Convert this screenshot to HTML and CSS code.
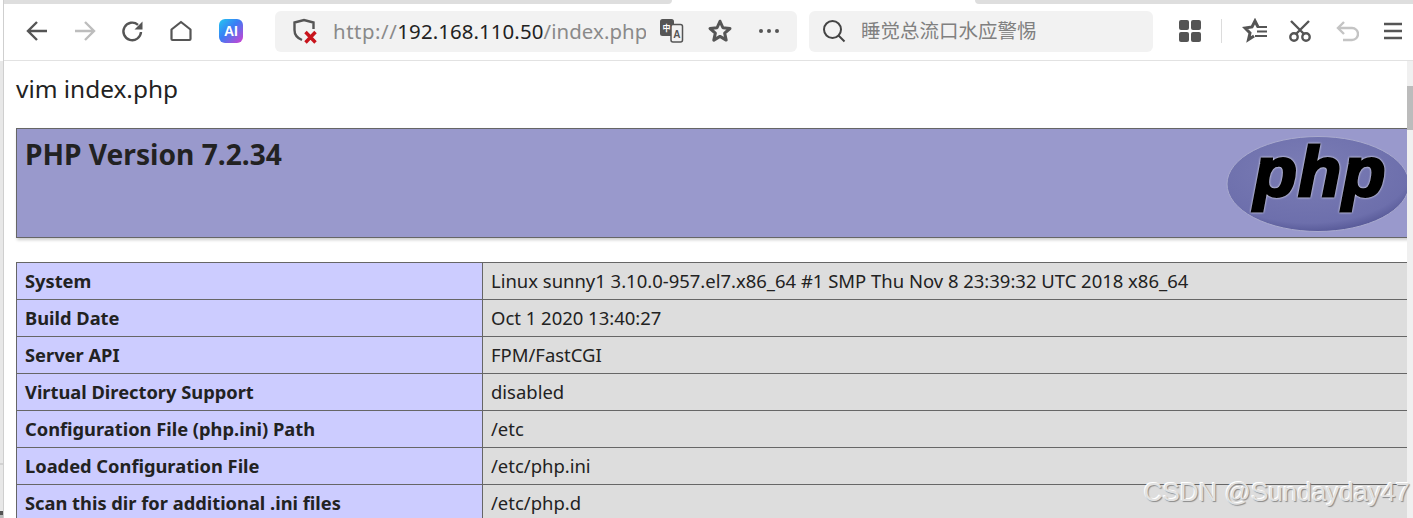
FILE: index.html
```html
<!DOCTYPE html>
<html lang="en">
<head>
<meta charset="utf-8">
<title>phpinfo()</title>
<link rel="stylesheet" href="styles.css">
</head>
<body>
<div class="shell">
  <div class="gutter"></div>
  <div class="window">
    <div class="tabstrip"><div class="strip-left"></div><div class="strip-gap"></div><div class="strip-right"></div></div>
    <header class="toolbar">
      <svg class="ico nav-back" width="24" height="24" viewBox="0 0 24 24"><path d="M22 12H3M12 3l-9 9 9 9" fill="none" stroke="#555" stroke-width="2.400"/></svg>
      <svg class="ico nav-fwd" width="24" height="24" viewBox="0 0 24 24"><path d="M2 12h19M12 3l9 9-9 9" fill="none" stroke="#bdbdbd" stroke-width="2.400"/></svg>
      <svg class="ico nav-reload" width="24" height="24" viewBox="0 0 24 24"><path d="M20 13a8.800 8.800 0 1 1-3-7.200" fill="none" stroke="#555" stroke-width="2.400"/><path d="M21.500 2.500v8h-8z" fill="#555"/></svg>
      <svg class="ico nav-home" width="24" height="24" viewBox="0 0 24 24"><path d="M2.500 10.500 12 3l9.500 7.500V20a1 1 0 0 1-1 1h-17a1 1 0 0 1-1-1z" fill="none" stroke="#555" stroke-width="2.200" stroke-linejoin="round"/></svg>
      <div class="ai-badge">AI</div>
      <div class="urlbar">
        <svg class="shield" width="26" height="26" viewBox="0 0 26 26"><path d="M10 22C5 20 2.500 16 2.500 12V4.500L12 2l9.500 2.500V11" fill="none" stroke="#555" stroke-width="2.400"/><path d="M13.500 14l10 10.500M23.500 14l-10 10.500" stroke="#c8141c" stroke-width="3.400"/></svg>
        <div class="url"><span class="url-scheme">http://</span><span class="url-host">192.168.110.50</span><span class="url-dim">/index.php</span></div>
        <svg class="translate" width="26" height="26" viewBox="0 0 26 26"><rect x="1" y="1" width="14" height="17" rx="2.500" fill="#555"/><rect x="12" y="6.500" width="11.500" height="17.500" rx="2" fill="#f2f2f2" stroke="#555" stroke-width="1.500"/><text x="7.500" y="13" class="tr-zh">中</text><text x="17.800" y="20" class="tr-a">A</text></svg>
        <svg class="star" width="26" height="26" viewBox="0 0 24 24"><path d="M12 3l2.700 6 6.500.7-4.900 4.300 1.400 6.400L12 17l-5.700 3.400 1.400-6.400-4.900-4.300 6.500-.7z" fill="none" stroke="#555" stroke-width="2.800" stroke-linejoin="round"/></svg>
        <svg class="more" width="22" height="6" viewBox="0 0 22 6"><circle cx="3" cy="3" r="2" fill="#555"/><circle cx="11" cy="3" r="2" fill="#555"/><circle cx="19" cy="3" r="2" fill="#555"/></svg>
      </div>
      <div class="searchbar">
        <svg class="search-ico" width="24" height="24" viewBox="0 0 24 24"><circle cx="10.500" cy="10.500" r="8.500" fill="none" stroke="#444" stroke-width="2"/><path d="M16.500 16.500l6 6" stroke="#444" stroke-width="2"/></svg>
        <span class="search-text">睡觉总流口水应警惕</span>
      </div>
      <svg class="ico grid" width="22" height="22" viewBox="0 0 22 22"><rect x="0" y="0" width="10" height="10" rx="2" fill="#555"/><rect x="12" y="0" width="10" height="10" rx="2" fill="#555"/><rect x="0" y="12" width="10" height="10" rx="2" fill="#555"/><rect x="12" y="12" width="10" height="10" rx="2" fill="#555"/></svg>
      <div class="divider"></div>
      <svg class="ico favs" width="26" height="26" viewBox="0 0 26 26"><path d="M16 9 13 3l-3 6-7 1 5 5-1.500 6.500L12 18" fill="none" stroke="#555" stroke-width="3"/><path d="M15 9h10M15 13.500h10M13 18h12" stroke="#555" stroke-width="2"/></svg>
      <svg class="ico scissors" width="24" height="24" viewBox="0 0 24 24"><circle cx="6" cy="18" r="3.700" fill="none" stroke="#555" stroke-width="2.400"/><circle cx="18" cy="18" r="3.700" fill="none" stroke="#555" stroke-width="2.400"/><path d="M3 2l13 13M21 2L8 15" stroke="#555" stroke-width="2.400"/></svg>
      <svg class="ico undo" width="24" height="24" viewBox="0 0 24 24"><path d="M4 9h13a5 5 0 0 1 0 12H8" fill="none" stroke="#c4c4c4" stroke-width="2.400"/><path d="M9 3 3 9l6 6" fill="none" stroke="#c4c4c4" stroke-width="2.400"/></svg>
      <svg class="ico menu" width="20" height="20" viewBox="0 0 20 20"><path d="M1 3h18M1 10h18M1 17h18" stroke="#555" stroke-width="2.600"/></svg>
    </header>
    <div class="viewport">
      <main class="page">
        <p class="cmd">vim index.php</p>
        <div class="banner">
          <h1 class="version">PHP Version 7.2.34</h1>
          <svg class="php-logo" width="192" height="100" viewBox="0 0 192 100">
            <defs>
              <radialGradient id="logoFill" cx="45%" cy="35%" r="70%"><stop offset="0" stop-color="#7b7db5"/><stop offset="0.8" stop-color="#6d6fac"/><stop offset="1" stop-color="#4f5190"/></radialGradient>
            </defs>
            <ellipse cx="92" cy="48" rx="91" ry="47.500" fill="url(#logoFill)" stroke="#a9aace" stroke-width="1"/>
            <text x="28" y="60" class="logo-text">php</text>
          </svg>
        </div>
        <table class="info">
          <tr><th>System</th><td>Linux sunny1 3.10.0-957.el7.x86_64 #1 SMP Thu Nov 8 23:39:32 UTC 2018 x86_64</td></tr>
          <tr><th>Build Date</th><td>Oct 1 2020 13:40:27</td></tr>
          <tr><th>Server API</th><td>FPM/FastCGI</td></tr>
          <tr><th>Virtual Directory Support</th><td>disabled</td></tr>
          <tr><th>Configuration File (php.ini) Path</th><td>/etc</td></tr>
          <tr><th>Loaded Configuration File</th><td>/etc/php.ini</td></tr>
          <tr><th>Scan this dir for additional .ini files</th><td>/etc/php.d</td></tr>
        </table>
      </main>
      <aside class="scrollbar"><div class="thumb"></div></aside>
    </div>
    <div class="watermark">CSDN @Sundayday47</div>
  </div>
</div>
</body>
</html>
```
FILE: styles.css
```css
* { box-sizing: border-box; }
html, body { margin: 0; height: 518px; overflow: hidden; background: #fff; }
body { font-family: "Noto Sans", "Open Sans", "Noto Sans CJK SC", sans-serif; color: #222; }
.shell { display: flex; width: 1413px; height: 518px; }
.gutter { width: 3px; flex: none; background: linear-gradient(to bottom, #fff 0 61px, #e8e8e8 61px 463px, #d2d2d2 463px 465px, #e8e8e8 465px 511px, #555 511px 515px, #bbb 515px 518px); }
.window { position: relative; width: 1410px; height: 518px; flex: none; display: flex; flex-direction: column; overflow: hidden; border-left: 1px solid #cfcfcf; }
.tabstrip { height: 4px; display: flex; flex: none; }
.strip-left { width: 668px; background: #dedede; border-bottom-right-radius: 4px; }
.strip-gap { width: 303px; }
.strip-right { flex: 1; background: #dedede; border-bottom-left-radius: 4px; }
.toolbar { height: 57px; flex: none; display: flex; align-items: center; border-bottom: 1px solid #e2e2e2; padding: 0 0 2px 21px; }
.ico { flex: none; }
.nav-fwd { margin-left: 24px; }
.nav-reload { margin-left: 24px; }
.nav-home { margin-left: 24px; }
.ai-badge { width: 24px; height: 24px; flex: none; margin-left: 26px; border-radius: 6px; background: linear-gradient(135deg, #22c8f0 0%, #3a7cf5 45%, #d63fd0 100%); color: #fff; font: 700 14px/24px "Liberation Sans", sans-serif; text-align: center; }
.urlbar { width: 522px; height: 41px; margin-left: 32px; flex: none; background: #f2f2f2; border-radius: 6px; display: flex; align-items: center; padding-left: 17px; }
.shield { flex: none; }
.url { width: 313px; margin-left: 15px; overflow: hidden; white-space: nowrap; font-size: 20.400px; line-height: 28px; flex: none; letter-spacing: 0.1px; }
.url-scheme { color: #8a8a8a; letter-spacing: 0.55px; }
.url-dim { color: #8a8a8a; }
.url-host { color: #222; }
.translate { flex: none; margin-left: 13px; }
.tr-zh { font: 700 8px "Noto Sans CJK SC", sans-serif; fill: #fff; text-anchor: middle; }
.tr-a { font: 700 10px "Liberation Sans", sans-serif; fill: #555; text-anchor: middle; }
.star { flex: none; margin-left: 22px; }
.more { flex: none; margin-left: 25px; }
.searchbar { width: 344px; height: 41px; margin-left: 12px; flex: none; background: #f2f2f2; border-radius: 6px; display: flex; align-items: center; padding-left: 13px; }
.search-ico { flex: none; }
.search-text { margin-left: 15px; font-size: 19.500px; line-height: 26px; color: #808080; white-space: nowrap; }
.grid { margin-left: 26px; }
.divider { width: 1px; height: 24px; background: #dcdcdc; margin-left: 20px; flex: none; }
.favs { margin-left: 20px; }
.scissors { margin-left: 20px; }
.undo { margin-left: 23px; }
.menu { margin-left: 24px; }
.viewport { flex: 1; min-height: 0; display: flex; overflow: hidden; }
.page { flex: 1; min-width: 0; overflow: hidden; padding: 11px 0 0 12px; }
.cmd { margin: 0; font-size: 24.400px; line-height: 34px; color: #222; }
.banner { margin-top: 22px; height: 110px; width: 1400px; background: #9999cc; border: 1px solid #666; box-shadow: 1px 2px 3px #ccc; padding: 7px 8px 0; display: flex; justify-content: space-between; align-items: flex-start; }
.version { margin: 0; font-size: 28.150px; line-height: 36px; font-weight: 700; color: #222; white-space: nowrap; }
.php-logo { flex: none; margin: 0 -11px 0 0; }
.logo-text { font: italic 700 70px "Liberation Sans", sans-serif; letter-spacing: 1.500px; fill: #000; stroke: #000; stroke-width: 3px; filter: drop-shadow(0 0 0.8px #fff); }
.info { margin-top: 24px; width: 1400px; border-collapse: collapse; table-layout: fixed; font-size: 18.470px; }
.info th, .info td { height: 37px; border: 1px solid #666; padding: 0 8px; text-align: left; white-space: nowrap; vertical-align: middle; line-height: 24px; }
.info th { width: 466px; background: #ccccff; font-size: 18.300px; font-weight: 700; color: #222; }
.info td { background: #dddddd; font-weight: 400; color: #222; }
.scrollbar { width: 6px; flex: none; background: #f0f0f0; padding-top: 25px; }
.thumb { height: 44px; background: #bcbcbc; }
.watermark { position: absolute; right: 3px; top: 474px; font: 26px/36px "Liberation Sans", sans-serif; color: #e2e2e2; text-shadow: 1px 1px 1px #8a8a8a, -1px -1px 0 #fff; white-space: nowrap; }
```
